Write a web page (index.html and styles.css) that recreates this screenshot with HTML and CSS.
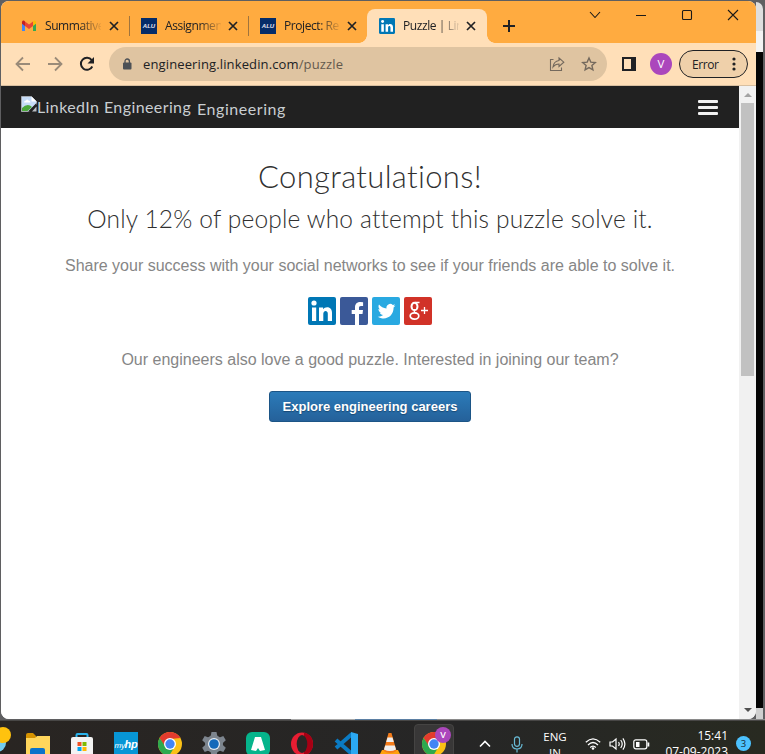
FILE: index.html
```
<!DOCTYPE html>
<html lang="en">
<head>
<meta charset="utf-8">
<title>Puzzle | LinkedIn Engineering</title>
<link rel="stylesheet" href="styles.css">
</head>
<body>
<div class="desktop">
  <div class="window">
    <div class="tabstrip">
      <div class="tab first">
        <svg class="favicon" viewBox="0 0 16 16"><path fill="#4285f4" d="M1 4v9h3V7z"/><path fill="#34a853" d="M12 7v6h3V4z"/><path fill="#ea4335" d="M4 3.500l4 3 4-3V8l-4 3-4-3z"/><path fill="#c5221f" d="M1 4.200C1 2.500 3 2 4 3.500V8L1 5.800z"/><path fill="#fbbc04" d="M15 4.200C15 2.500 13 2 12 3.500V8l3-2.200z"/></svg>
        <span class="tab-title">Summative</span>
        <svg class="close" viewBox="0 0 10 10"><path d="M1 1l8 8M9 1l-8 8"/></svg>
      </div>
      <div class="tab divided">
        <span class="favicon alu">ALU</span>
        <span class="tab-title">Assignmen</span>
        <svg class="close" viewBox="0 0 10 10"><path d="M1 1l8 8M9 1l-8 8"/></svg>
      </div>
      <div class="tab divided">
        <span class="favicon alu">ALU</span>
        <span class="tab-title">Project: Re</span>
        <svg class="close" viewBox="0 0 10 10"><path d="M1 1l8 8M9 1l-8 8"/></svg>
      </div>
      <div class="tab active">
        <svg class="favicon" viewBox="0 0 28 28"><rect width="28" height="28" rx="2" fill="#0077b5"/><g fill="#fff"><circle cx="6.300" cy="6.300" r="2.600"/><path d="M4 11h4.500v13H4zM11.500 11h4.300v1.800c2-3.300 8.700-3 8.700 3.200v8h-4.400v-7c0-4-4.200-3.500-4.200 0v7h-4.400z"/></g></svg>
        <span class="tab-title">Puzzle | Lin</span>
        <svg class="close" viewBox="0 0 10 10"><path d="M1 1l8 8M9 1l-8 8"/></svg>
      </div>
      <svg class="new-tab" viewBox="0 0 12 12"><path d="M6 0v12M0 6h12"/></svg>
      <div class="window-controls">
        <svg viewBox="0 0 12 12"><path d="M1 3l5 5.500L11 3"/></svg>
        <svg viewBox="0 0 12 12"><path d="M1 6.500h10"/></svg>
        <svg viewBox="0 0 12 12"><rect x="1.500" y="1.500" width="9" height="9" rx="1"/></svg>
        <svg viewBox="0 0 12 12"><path d="M1 1l10 10M11 1L1 11"/></svg>
      </div>
    </div>

    <div class="toolbar">
      <svg class="nav-icon dim" viewBox="0 0 16 16"><path d="M15 8H2M8 1.500L1.500 8 8 14.500"/></svg>
      <svg class="nav-icon dim" viewBox="0 0 16 16"><path d="M1 8h13M8 1.500L14.500 8 8 14.500"/></svg>
      <svg class="nav-icon" viewBox="0 0 16 16"><path d="M13.300 10.500A6 6 0 1 1 12.700 4.200"/><path class="solid" d="M15 1v6.500H8.500z"/></svg>
      <div class="omnibox">
        <svg class="lock" viewBox="0 0 10 12"><rect x="1" y="4.500" width="8.500" height="7" rx="1" fill="#4d5156"/><path d="M3 5V3.200a2.200 2.200 0 0 1 4.400 0V5" fill="none" stroke="#4d5156" stroke-width="1.300"/></svg>
        <span class="url">engineering.linkedin.com<span class="path">/puzzle</span></span>
        <svg class="omni-icon share" viewBox="0 0 16 16"><path d="M4.500 3.500H1.500V14.500H12.500V11.500"/><path d="M10 2l4.800 4.200L10 10.500V8C7.500 8 5.500 9 4 11c.4-3.500 2.300-6 6-6.500z"/></svg>
        <svg class="omni-icon" viewBox="0 0 16 16"><path d="M8 2l1.800 4.100 4.500.4-3.400 3 1 4.400L8 11.600l-3.900 2.300 1-4.400-3.400-3 4.500-.4z"/></svg>
      </div>
      <svg class="panel" viewBox="0 0 14 14"><path fill="#202124" fill-rule="evenodd" d="M0 0h14v14H0zM2 2v10h7V2z"/></svg>
      <span class="avatar">V</span>
      <div class="error"><span>Error</span><svg viewBox="0 0 4 14"><circle cx="2" cy="2" r="1.600"/><circle cx="2" cy="7" r="1.600"/><circle cx="2" cy="12" r="1.600"/></svg></div>
    </div>

    <div class="viewport">
      <div class="page">
        <header class="site-header">
          <svg class="broken" viewBox="0 0 16 16"><path fill="#c6dcf7" stroke="#a5a9ae" d="M.5.500h10l5 5V8L8 15.500H.5z"/><path fill="#fff" d="M10.500.5v5h5z"/><path fill="#fff" d="M3 6.500q0-2 2-2 1-1.800 2.500 0 2 0 2 2z"/><path fill="#4ca83b" d="M1 15v-3q4-4 8-2.500L11 11 6.500 15z"/><path fill="#212121" d="M7 15.500L15.500 7v2L10 15.500z"/><path fill="#b9bdc3" d="M11 15.500l4.500-5v5z"/></svg>
          <span class="logo-alt">LinkedIn Engineering</span>
          <span class="brand">Engineering</span>
          <svg class="menu" viewBox="0 0 20 15"><rect width="20" height="3" rx="1"/><rect y="6" width="20" height="3" rx="1"/><rect y="12" width="20" height="3" rx="1"/></svg>
        </header>
        <main class="content">
          <h1><span>Congratulations!</span></h1>
          <h2><span>Only 12% of people who attempt this puzzle solve it.</span></h2>
          <p class="lead">Share your success with your social networks to see if your friends are able to solve it.</p>
          <div class="social">
            <svg viewBox="0 0 28 28"><rect width="28" height="28" rx="2" fill="#0077b5"/><g fill="#fff"><circle cx="6" cy="6" r="2.600"/><path d="M4 10.500h4.200V24H4zM11 10.500h4.100v1.800c2-3.200 8.900-3 8.900 3.500V24h-4.200v-7.200c0-4-4.500-3.600-4.500 0V24H11z"/></g></svg>
            <svg viewBox="0 0 28 28"><rect width="28" height="28" rx="2" fill="#3b5998"/><path fill="#fff" d="M15 28V17h-3.300v-4H15v-2.500C15 6.800 17.200 5 20.500 5l2.600.2v3.700H21c-1.600 0-2 .8-2 2V13h4l-.5 4H19v11z"/></svg>
            <svg viewBox="0 0 28 28"><rect width="28" height="28" rx="2" fill="#29a9e1"/><path fill="#fff" d="M23.500 8.600c-.7.300-1.300.5-2 .6.700-.5 1.300-1.200 1.600-2-.7.400-1.500.7-2.300.9a3.700 3.700 0 0 0-6.300 3.300c-3.100-.2-5.700-1.600-7.500-3.900-1 1.700-.5 3.900 1.100 4.900-.6 0-1.200-.2-1.700-.5 0 1.800 1.300 3.300 3 3.700-.6.100-1.100.1-1.700 0 .5 1.500 1.800 2.500 3.400 2.500a7.500 7.500 0 0 1-5.400 1.600c7.500 4.600 16-.2 15.900-9.100.7-.6 1.400-1.200 1.900-2z"/></svg>
            <svg viewBox="0 0 28 28"><rect width="28" height="28" rx="2" fill="#d13228"/><g fill="none" stroke="#fff"><ellipse cx="10.500" cy="9.400" rx="3" ry="3.700" stroke-width="2"/><path stroke-width="1.300" d="M11 5.500h4.500M11 13c-2 1.500 0 2.300 1.500 3.500"/><ellipse cx="10.500" cy="19" rx="4.300" ry="3.200" stroke-width="1.700"/><path stroke-width="1.300" d="M17 13.500h7M20.500 10v7"/></g></svg>
          </div>
          <p class="team">Our engineers also love a good puzzle. Interested in joining our team?</p>
          <a class="button">Explore engineering careers</a>
        </main>
      </div>
      <div class="scrollbar">
        <svg viewBox="0 0 8 4"><path fill="#a3a3a3" d="M0 4l4-4 4 4z"/></svg>
        <div class="thumb"></div>
        <svg class="down" viewBox="0 0 8 4"><path fill="#505050" d="M0 0l4 4 4-4z"/></svg>
      </div>
    </div>
  </div>
  <div class="behind"><div class="behind-top"></div><div class="behind-dark"></div><div class="behind-foot"></div></div>
</div>

<div class="taskbar">
  <div class="apps">
    <svg class="weather" viewBox="0 0 12 30"><circle cx="-3" cy="19" r="9" fill="#74cdf0"/><circle cx="3" cy="11" r="8" fill="#ffc20e"/></svg>
    <div class="app"><svg viewBox="0 0 24 24"><path fill="#d69300" d="M0 3q0-2 2-2h5l3 3v4H0z"/><path fill="#ffd65c" d="M0 6h9l2-2h13v20H0z"/><path fill="#0b73ca" d="M4 24v-6q0-2 2-2h11q2 0 2 2v6z"/></svg></div>
    <div class="app"><svg viewBox="0 0 24 24"><path fill="none" stroke="#2ab4ed" stroke-width="2" d="M6.500 7V3q0-1 1-1h9q1 0 1 1v4"/><rect x="1" y="5" width="22" height="20" rx="2" fill="#f3f3f3"/><path fill="#f05022" d="M7.500 10h4v4h-4z"/><path fill="#7fba00" d="M12.500 10h4v4h-4z"/><path fill="#00a4ef" d="M7.500 15h4v4h-4z"/><path fill="#ffb900" d="M12.500 15h4v4h-4z"/></svg></div>
    <div class="app"><span class="hp">my<b>hp</b></span></div>
    <div class="app"><svg viewBox="0 0 24 24"><circle cx="12" cy="12" r="12" fill="#fbc116"/><path fill="#e33b2e" d="M1.600 6A12 12 0 0 1 22.400 6L12 7 7 15z"/><path fill="#2da94f" d="M1.600 6A12 12 0 0 0 11 24l5.500-9L7 14z"/><circle cx="12" cy="12" r="6" fill="#fff"/><circle cx="12" cy="12" r="4.700" fill="#4285f4"/></svg></div>
    <div class="app"><svg viewBox="0 0 24 24"><g fill="#7d858e"><circle cx="12" cy="12" r="9"/><path d="M9.500 0h5l1 5h-7zM9.500 24h5l1-5h-7zM.2 8.300L2.700 4l5 2-3.500 6zM23.800 15.700L21.300 20l-5-2 3.500-6zM2.700 20L.2 15.700 4.200 12l3.500 6zM21.300 4l2.500 4.300L19.800 12l-3.500-6z"/></g><circle cx="12" cy="12" r="6" fill="#e5edf5"/><circle cx="12" cy="12" r="4.800" fill="#1469ba"/></svg></div>
    <div class="app"><svg viewBox="0 0 24 24"><rect width="24" height="24" rx="6" fill="#05b48b"/><path fill="#fff" d="M9 5h6l4 13-5 1-2-3-2 3-5-1z"/></svg></div>
    <div class="app"><svg viewBox="0 0 24 24"><ellipse cx="12" cy="12" rx="11" ry="11.500" fill="#e71d32"/><path fill="#a70014" d="M14 .5c12 2 12 21 0 23z"/><ellipse cx="12" cy="12" rx="5.300" ry="9" fill="#292625"/></svg></div>
    <div class="app"><svg viewBox="0 0 24 24"><path d="M2 8l16 14M2 16L18 2" stroke="#0b7bc4" stroke-width="4"/><path fill="#2ba8f2" d="M17 0l7 2v20l-7 2z"/></svg></div>
    <div class="app"><svg viewBox="0 0 24 24"><path fill="#ffa20c" d="M4 18h16l3 6H1z"/><path fill="#f47b18" d="M10.500 1h3l5 18q-6.500 4-13 0z"/><path fill="#eee" d="M9.500 5.500h5l1.300 4.500H8.200zM7.200 13.500h9.600l1.200 4q-6 3-12 0z"/></svg></div>
    <div class="app current"><svg viewBox="0 0 24 24"><circle cx="12" cy="12" r="12" fill="#fbc116"/><path fill="#e33b2e" d="M1.600 6A12 12 0 0 1 22.400 6L12 7 7 15z"/><path fill="#2da94f" d="M1.600 6A12 12 0 0 0 11 24l5.500-9L7 14z"/><circle cx="12" cy="12" r="6" fill="#fff"/><circle cx="12" cy="12" r="4.700" fill="#4285f4"/></svg><span class="badge">V</span></div>
  </div>
  <div class="tray">
    <svg class="chevron" viewBox="0 0 12 8"><path d="M1 6.500l5-5 5 5"/></svg>
    <svg class="mic" viewBox="0 0 12 17"><rect x="3.500" y=".8" width="5" height="9.500" rx="2.500"/><path d="M1 8q0 5 5 5t5-5M6 13v3.500"/></svg>
    <div class="lang">ENG<br>IN</div>
    <svg class="wifi" viewBox="0 0 16 14"><path d="M.8 5.300q7.200-7 14.400 0M3 8q5-5 10 0M5.200 10.500q2.800-2.800 5.600 0"/><circle cx="8" cy="11.500" r="1.300" fill="#fff" stroke="none"/></svg>
    <svg class="volume" viewBox="0 0 17 14"><path d="M1 5h2.500L7 2v10L3.500 9H1zM9.500 5q1.500 2 0 4M11.700 3q3 4 0 8M13.900 1.300q4 5.700 0 11.400"/></svg>
    <svg class="battery" viewBox="0 0 17 11"><rect x=".8" y=".8" width="13" height="9" rx="2"/><path fill="#fff" stroke="none" d="M3 3h3.500v5H3zM14.500 3.500h1.800v4h-1.800z"/></svg>
    <div class="clock">15:41<br>07-09-2023</div>
    <span class="count">3</span>
  </div>
</div>
</body>
</html>
```
FILE: styles.css
```
* { box-sizing: border-box; }
body {
  margin: 0;
  width: 765px;
  height: 754px;
  overflow: hidden;
  background: #5f5f61;
  font-family: "Open Sans", "Noto Sans", sans-serif;
  color: #202124;
}
svg { display: block; flex: none; fill: none; overflow: hidden; }
.desktop {
  display: flex;
  height: 720px;
  padding: 1px 2px 1px 1px;
  background: linear-gradient(90deg, transparent 291px, #a8a8a8 291px 355px, #5b7fa3 355px 437px, #8a8a8a 437px) bottom / 100% 1px no-repeat;
}
.window {
  display: flex;
  flex-direction: column;
  width: 755px;
  height: 718px;
  border-radius: 8px;
  overflow: hidden;
  background: #fff;
}

/* tabs */
.tabstrip { display: flex; height: 42px; padding: 8px 0 0 9px; background: #ffab40; }
.tab { display: flex; align-items: center; width: 119px; height: 34px; padding-left: 12px; position: relative; }
.tab.first { padding-left: 11px; }
.tab.first .close { margin-left: 8px; }
.tab.divided::before { content: ""; position: absolute; left: 0; top: 7px; width: 1px; height: 20px; background: #a0743d; }
.tab.active { width: 120px; background: #ffdfb8; border-radius: 8px 8px 0 0; }
.tab.active::before, .tab.active::after { content: ""; position: absolute; bottom: 0; width: 8px; height: 8px; }
.tab.active::before { left: -8px; background: radial-gradient(circle at 0 0, transparent 7.5px, #ffdfb8 8px); }
.tab.active::after { right: -8px; background: radial-gradient(circle at 100% 0, transparent 7.5px, #ffdfb8 8px); }
.favicon { width: 16px; height: 16px; flex: none; }
.alu { background: #052c69; color: #e9e4ee; font: italic 900 6px/16px "Liberation Sans", sans-serif; text-align: center; }
.tab-title {
  width: 56px;
  margin-left: 8px;
  overflow: hidden;
  white-space: nowrap;
  font-size: 12px;
  line-height: 18px;
  letter-spacing: -.42px;
  -webkit-mask-image: linear-gradient(90deg, #000 34px, transparent 58px);
  mask-image: linear-gradient(90deg, #000 34px, transparent 58px);
}
.close { width: 10px; height: 10px; margin-left: 7px; stroke: #202124; stroke-width: 1.7; }
.new-tab { width: 12px; height: 12px; margin: 11px 0 0 16px; stroke: #202124; stroke-width: 2; }
.window-controls { display: flex; gap: 34px; margin: 0 17px 0 auto; }
.window-controls svg { width: 12px; height: 12px; stroke: #1c1a18; stroke-width: 1.1; }

/* toolbar */
.toolbar { display: flex; align-items: center; height: 43px; background: #ffdfb8; border-bottom: 1px solid #d8bfa0; padding-left: 14px; flex: none; }
.nav-icon { width: 16px; height: 16px; margin-right: 16px; stroke: #202124; stroke-width: 2; }
.nav-icon.dim { stroke: #9a8b79; stroke-width: 1.8; }
.solid { fill: #202124; stroke: none; }
.omnibox { display: flex; align-items: center; width: 498px; height: 34px; margin-left: -2px; padding: 0 10px 0 13px; border-radius: 17px; background: #dfc4a1; }
.lock { width: 10px; height: 12px; }
.url { margin: 0 auto 0 11px; font-size: 13px; letter-spacing: .13px; }
.path { color: #64594d; }
.omni-icon { width: 16px; height: 16px; stroke: #74695d; stroke-width: 1.4; margin-left: 16px; }
.omni-icon.share { stroke-width: 1.1; }
.panel { width: 14px; height: 14px; margin-left: 15px; }
.avatar { width: 22px; height: 22px; margin-left: 14px; border-radius: 50%; background: #ab47bc; color: #fff; font-size: 11.500px; line-height: 22px; text-align: center; }
.error { display: flex; align-items: center; width: 69px; height: 28px; margin-left: 7px; padding-left: 12px; border: 1px solid #202124; border-radius: 14px; background: #efd0aa; font-size: 12px; letter-spacing: -.4px; }
.error svg { width: 4px; height: 14px; fill: #202124; margin-left: auto; margin-right: 11px; }

/* page */
.viewport { display: flex; flex: 1; min-height: 0; }
.page { width: 738px; background: #fff; }
.site-header { display: flex; height: 42px; padding: 0 21px 0 20px; background: #212121; color: #c9ced1; font-family: Lato, sans-serif; font-size: 16px; line-height: 20px; white-space: nowrap; }
.broken { width: 16px; height: 16px; margin-top: 10px; }
.logo-alt { width: 153px; margin: 11px 0 0 0; letter-spacing: .4px; }
.brand { margin: 13px 0 0 7px; letter-spacing: .55px; }
.menu { width: 20px; height: 15px; margin: 14px 0 0 auto; fill: #f2f2f2; }
.content { display: flex; flex-direction: column; align-items: center; padding-top: 29px; white-space: nowrap; font-family: "Liberation Sans", Arial, sans-serif; }
h1, h2 { margin: 0; font-family: Lato, sans-serif; font-weight: 300; color: #303030; }
h1 { font-size: 31px; line-height: 38px; letter-spacing: .33px; }
h2 { font-size: 24.500px; line-height: 30px; margin-top: 9px; letter-spacing: .17px; }
p { margin: 0; font-size: 16px; line-height: 20px; color: #868686; }
.lead { margin-top: 22px; }
.social { display: flex; gap: 4px; margin: 21px 0 25px; }
.social svg { width: 28px; height: 28px; }
.button { width: 202px; height: 31px; margin-top: 21px; border: 1px solid #1c5586; border-radius: 3px; background: linear-gradient(#2b7bb9, #25619a); color: #fff; font-size: 13px; font-weight: 700; line-height: 29px; text-align: center; text-shadow: 0 1px 1px #184873; }
.scrollbar { display: flex; flex-direction: column; align-items: center; width: 17px; padding: 7px 0; background: #f1f1f1; }
.scrollbar svg { width: 8px; height: 4px; }
.thumb { width: 13px; height: 273px; margin-top: 6px; background: #c1c1c1; }
.scrollbar .down { margin-top: auto; }
.behind { display: flex; flex-direction: column; width: 7px; margin-top: 1px; }
.behind-top { height: 50px; background: linear-gradient(#dedede 29px, #f3f3f3 29px); border-radius: 0 7px 0 0; }
.behind-dark { flex: 1; background: #050505; }
.behind-foot { height: 11px; background: #cfcfcf; }

/* taskbar */
.taskbar { display: flex; height: 48px; background: linear-gradient(90deg, #292522, #262626 60%, #282a21); border-top: 1px solid #484746; color: #fff; }
.apps { display: flex; align-items: center; flex: none; height: 46px; }
.weather { width: 12px; height: 30px; margin: -10px 4px 0 0; }
.app { display: flex; align-items: center; justify-content: center; width: 44px; height: 46px; position: relative; }
.app > svg { width: 24px; height: 24px; }
.current::before { content: ""; position: absolute; inset: 3px 2px; background: #383737; border: 1px solid #454443; border-radius: 4px; }
.current > svg { position: relative; }
.badge { position: absolute; left: 23px; top: 6px; width: 16px; height: 16px; border-radius: 50%; background: #ab47bc; font-size: 9px; font-weight: 600; line-height: 16px; text-align: center; }
.hp { width: 24px; height: 24px; background: #0796d6; font: italic 8px/24px "Liberation Sans", sans-serif; letter-spacing: -.3px; text-align: center; }
.hp b { font-size: 11px; }
.tray { display: flex; align-items: flex-start; flex: 1; stroke: #fff; }
.tray svg { stroke-width: 1.200; }
.tray div, .tray span { stroke: none; }
.chevron { width: 12px; height: 8px; margin: 19px 0 0 23px; }
.tray .chevron { stroke-width: 1.600; }
.mic { width: 12px; height: 17px; margin: 15px 0 0 20px; stroke: #69bbd6; }
.lang { width: 30px; margin: 8px 0 0 17px; font-size: 11.500px; line-height: 16px; text-align: center; }
.wifi { width: 16px; height: 14px; margin: 16px 0 0 15px; }
.volume { width: 17px; height: 14px; margin: 16px 0 0 8px; }
.battery { width: 17px; height: 11px; margin: 18px 0 0 7px; }
.clock { width: 70px; margin: 7px 0 0 8px; font-size: 12px; line-height: 16px; text-align: right; }
.count { width: 15px; height: 15px; margin: 15px 0 0 8px; border-radius: 50%; background: #4cc2ff; color: #172733; font-size: 9.500px; line-height: 15px; text-align: center; }
```
